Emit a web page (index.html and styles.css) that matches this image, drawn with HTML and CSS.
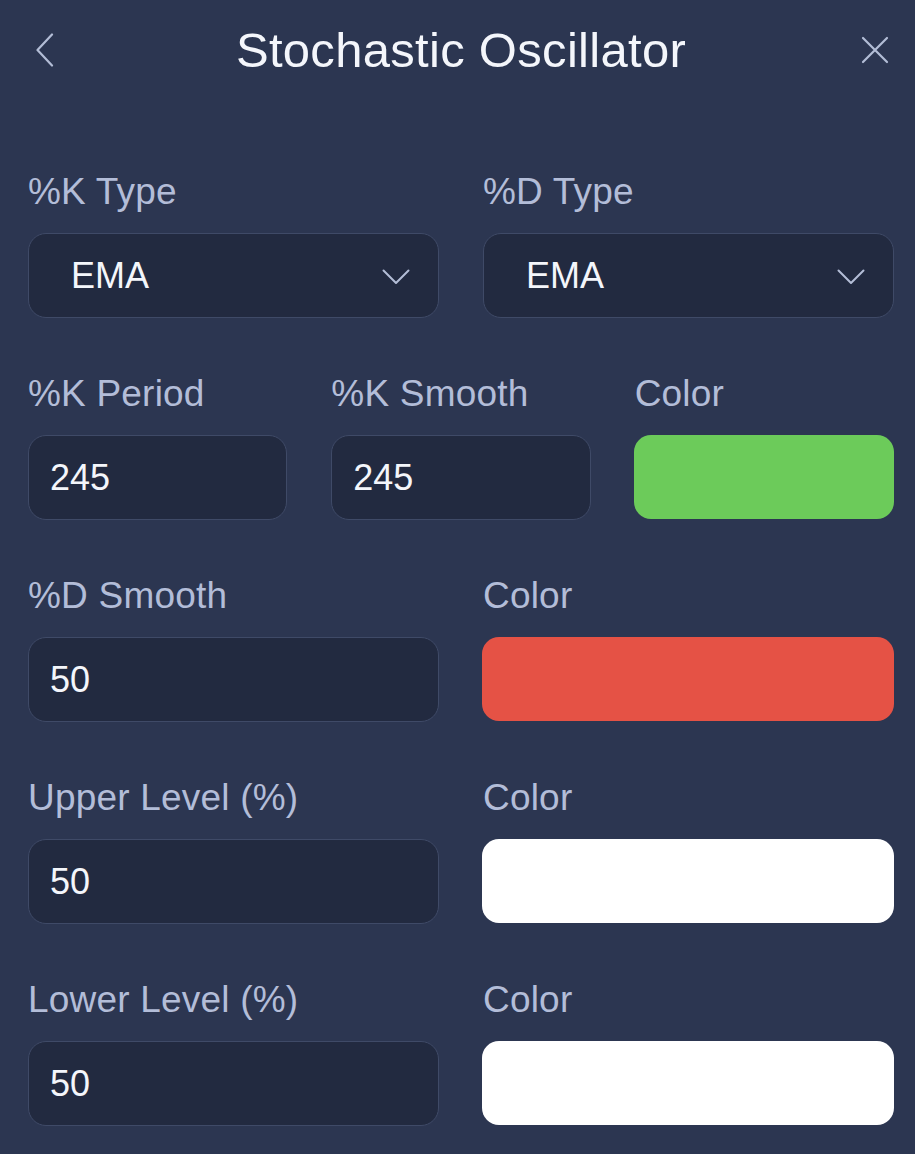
FILE: index.html
```html
<!DOCTYPE html>
<html lang="en">
<head>
    <meta charset="UTF-8">
    <meta name="viewport" content="width=device-width, initial-scale=1.0">
    <title>Stochastic Oscillator</title>
    <link rel="stylesheet" href="styles.css">
</head>
<body>
    <div class="header">
        <div class="back">
            <svg width="18" height="34" viewBox="0 0 18 34"><path d="M16 1.5 L1.5 17 L16 32.5" fill="none" stroke="#b3bdd6" stroke-width="2.2" stroke-linecap="round" stroke-linejoin="round"/></svg>
        </div>
        <h1>Stochastic Oscillator</h1>
        <div class="close">
            <svg width="28" height="28" viewBox="0 0 28 28"><path d="M2 2 L26 26 M26 2 L2 26" fill="none" stroke="#b3bdd6" stroke-width="2.2" stroke-linecap="round"/></svg>
        </div>
    </div>

    <div class="form">
        <div class="row cols-2">
            <div class="field">
                <div class="label">%K Type</div>
                <div class="box select">
                    <span>EMA</span>
                    <svg width="28" height="16" viewBox="0 0 28 16"><path d="M1.5 1.5 L14 14 L26.5 1.5" fill="none" stroke="#b3bdd6" stroke-width="2" stroke-linecap="round" stroke-linejoin="round"/></svg>
                </div>
            </div>
            <div class="field">
                <div class="label">%D Type</div>
                <div class="box select">
                    <span>EMA</span>
                    <svg width="28" height="16" viewBox="0 0 28 16"><path d="M1.5 1.5 L14 14 L26.5 1.5" fill="none" stroke="#b3bdd6" stroke-width="2" stroke-linecap="round" stroke-linejoin="round"/></svg>
                </div>
            </div>
        </div>

        <div class="row cols-3">
            <div class="field">
                <div class="label">%K Period</div>
                <div class="box">245</div>
            </div>
            <div class="field">
                <div class="label">%K Smooth</div>
                <div class="box">245</div>
            </div>
            <div class="field">
                <div class="label">Color</div>
                <div class="swatch green"></div>
            </div>
        </div>

        <div class="row cols-2">
            <div class="field">
                <div class="label">%D Smooth</div>
                <div class="box">50</div>
            </div>
            <div class="field">
                <div class="label">Color</div>
                <div class="swatch red"></div>
            </div>
        </div>

        <div class="row cols-2">
            <div class="field">
                <div class="label">Upper Level (%)</div>
                <div class="box">50</div>
            </div>
            <div class="field">
                <div class="label">Color</div>
                <div class="swatch white"></div>
            </div>
        </div>

        <div class="row cols-2">
            <div class="field">
                <div class="label">Lower Level (%)</div>
                <div class="box">50</div>
            </div>
            <div class="field">
                <div class="label">Color</div>
                <div class="swatch white"></div>
            </div>
        </div>
    </div>
</body>
</html>
```

FILE: styles.css
```css
body {
    margin: 0;
    padding: 0 21px 0 28px;
    background-color: #2c3651;
    font-family: "Liberation Sans", Arial, sans-serif;
    color: #f4f6fb;
    height: 1154px;
    overflow: hidden;
}
.header {
    display: grid;
    grid-template-columns: 1fr auto 1fr;
    align-items: center;
    height: 100px;
}
.header h1 {
    margin: 0;
    font-size: 49px;
    font-weight: normal;
    color: #f4f6fb;
    letter-spacing: 0.3px;
}
.back {
    padding-left: 8px;
    display: flex;
}
.close {
    display: flex;
    justify-content: flex-end;
    padding-right: 5px;
}
.form {
    padding-top: 72px;
}
.row {
    display: grid;
    column-gap: 44px;
    margin-bottom: 56px;
}
.cols-2 {
    grid-template-columns: 1fr 1fr;
}
.cols-3 {
    grid-template-columns: 1fr 1fr 1fr;
}
.label {
    font-size: 37px;
    line-height: 40px;
    color: #b3bdd8;
    margin-bottom: 21px;
    white-space: nowrap;
    letter-spacing: 0.2px;
}
.box {
    box-sizing: border-box;
    height: 85px;
    border: 1px solid #3f4a67;
    border-radius: 18px;
    background-color: #222a40;
    display: flex;
    align-items: center;
    padding: 0 21px;
    font-size: 36px;
    color: #f4f6fb;
}
.select {
    justify-content: space-between;
    padding: 0 28px 0 42px;
}
.select svg {
    margin-top: 2px;
}
.swatch {
    box-sizing: border-box;
    height: 84px;
    margin-left: -1px;
    border-radius: 17px;
}
.green {
    background-color: #6ccb5a;
}
.red {
    background-color: #e55245;
}
.white {
    background-color: #ffffff;
}
```
